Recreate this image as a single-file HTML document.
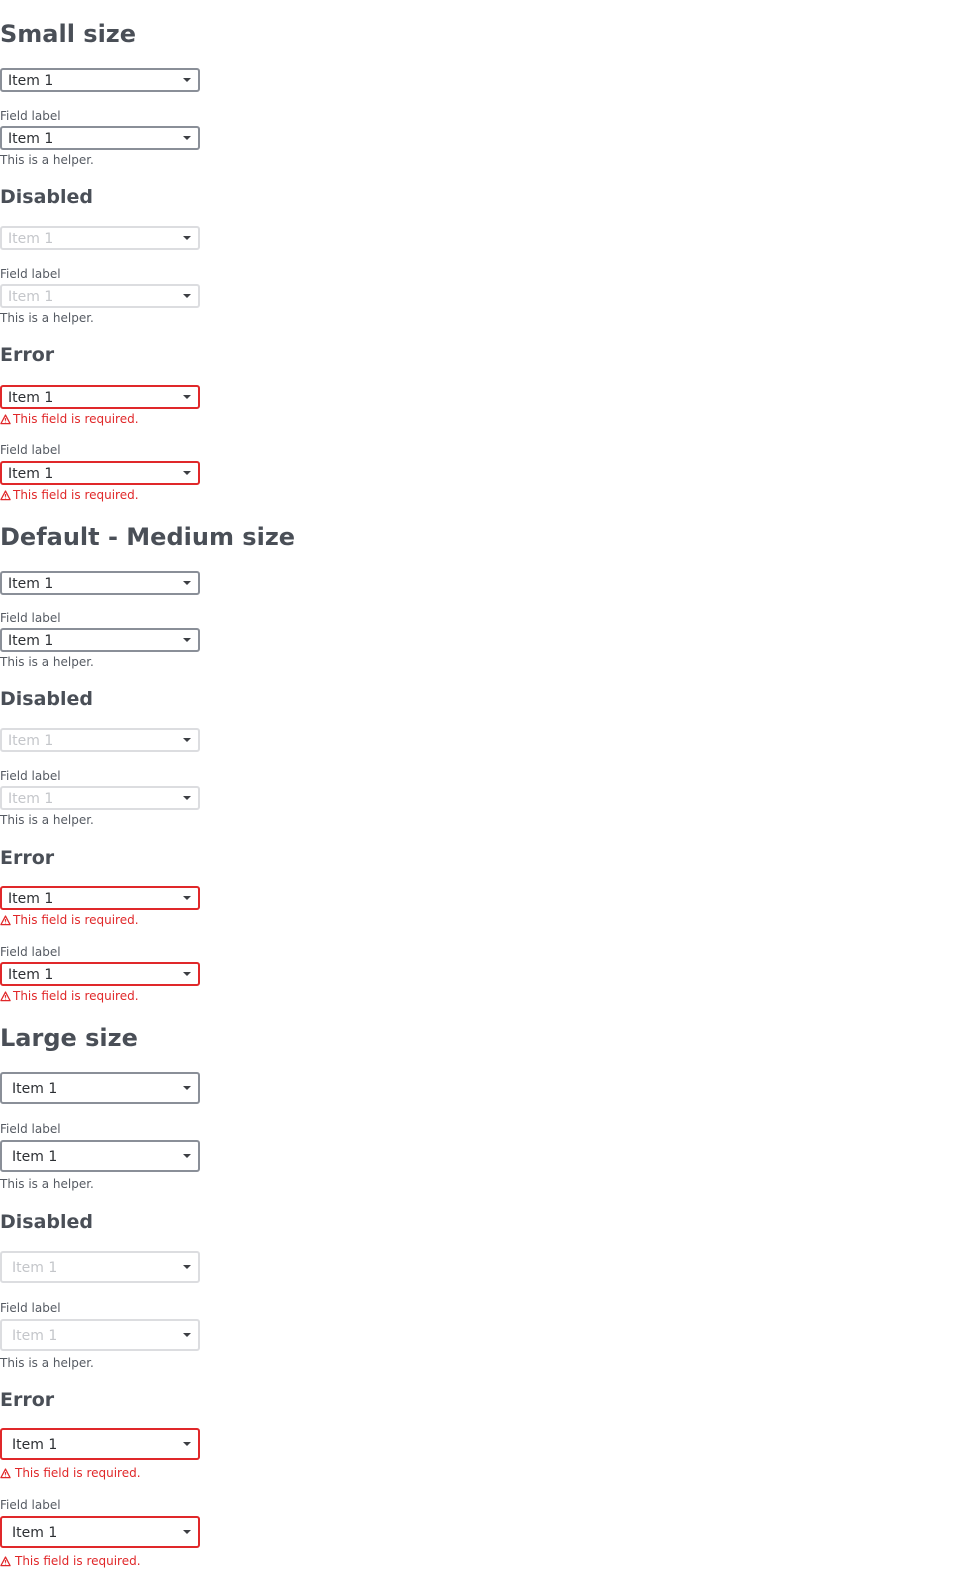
<!DOCTYPE html><html><head><meta charset="utf-8"><style>
body{margin:0;width:977px;height:1570px;position:relative;background:#fff;font-family:"DejaVu Sans","Liberation Sans",sans-serif;}
div{position:absolute;left:0;white-space:nowrap;margin-top:1px}
.h1{font-size:24px;font-weight:bold;color:#4a4f57;line-height:30px;height:30px}
.h2{font-size:19px;font-weight:bold;color:#4a4f57;line-height:24px;height:24px}
.l{font-size:12px;color:#555a62;line-height:16px;height:16px}
.s{margin-top:0;width:200px;box-sizing:border-box;border:2px solid #8a8f98;border-radius:3px;font-size:14px;color:#2c2f33;padding-left:6px;padding-top:1px;height:24px;line-height:20px}
.s.L{height:32px;line-height:28px;padding-left:10px}
.s.d{border-color:#dcdde0;color:#c4c6ca}
.s.e{border-color:#e0282a}
.s::after{content:"";position:absolute;right:7px;top:50%;margin-top:-2px;border-left:4px solid transparent;border-right:4px solid transparent;border-top:4px solid #3c3f44}
.er{font-size:12px;color:#e0282a;line-height:16px;height:16px;padding-left:13px}
.er.L{padding-left:15px}
.er svg{position:absolute;left:0;top:3px}
</style></head><body>
<div class="h1" style="top:18px">Small size</div>
<div class="s" style="top:68px">Item 1</div>
<div class="l" style="top:107px">Field label</div>
<div class="s" style="top:126px">Item 1</div>
<div class="l" style="top:151px">This is a helper.</div>
<div class="h2" style="top:184px">Disabled</div>
<div class="s d" style="top:226px">Item 1</div>
<div class="l" style="top:265px">Field label</div>
<div class="s d" style="top:284px">Item 1</div>
<div class="l" style="top:309px">This is a helper.</div>
<div class="h2" style="top:342px">Error</div>
<div class="s e" style="top:385px">Item 1</div>
<div class="er" style="top:410px"><svg width="11" height="11" viewBox="0 0 12 12"><path d="M6 1.2L11 10.5H1Z" fill="none" stroke="#e0282a" stroke-width="1.4" stroke-linejoin="round"/><path d="M6 4.5V7.3M6 8.4V9.2" stroke="#e0282a" stroke-width="1.3"/></svg>This field is required.</div>
<div class="l" style="top:441px">Field label</div>
<div class="s e" style="top:461px">Item 1</div>
<div class="er" style="top:486px"><svg width="11" height="11" viewBox="0 0 12 12"><path d="M6 1.2L11 10.5H1Z" fill="none" stroke="#e0282a" stroke-width="1.4" stroke-linejoin="round"/><path d="M6 4.5V7.3M6 8.4V9.2" stroke="#e0282a" stroke-width="1.3"/></svg>This field is required.</div>

<div class="h1" style="top:521px">Default - Medium size</div>
<div class="s" style="top:571px">Item 1</div>
<div class="l" style="top:609px">Field label</div>
<div class="s" style="top:628px">Item 1</div>
<div class="l" style="top:653px">This is a helper.</div>
<div class="h2" style="top:686px">Disabled</div>
<div class="s d" style="top:728px">Item 1</div>
<div class="l" style="top:767px">Field label</div>
<div class="s d" style="top:786px">Item 1</div>
<div class="l" style="top:811px">This is a helper.</div>
<div class="h2" style="top:845px">Error</div>
<div class="s e" style="top:886px">Item 1</div>
<div class="er" style="top:911px"><svg width="11" height="11" viewBox="0 0 12 12"><path d="M6 1.2L11 10.5H1Z" fill="none" stroke="#e0282a" stroke-width="1.4" stroke-linejoin="round"/><path d="M6 4.5V7.3M6 8.4V9.2" stroke="#e0282a" stroke-width="1.3"/></svg>This field is required.</div>
<div class="l" style="top:943px">Field label</div>
<div class="s e" style="top:962px">Item 1</div>
<div class="er" style="top:987px"><svg width="11" height="11" viewBox="0 0 12 12"><path d="M6 1.2L11 10.5H1Z" fill="none" stroke="#e0282a" stroke-width="1.4" stroke-linejoin="round"/><path d="M6 4.5V7.3M6 8.4V9.2" stroke="#e0282a" stroke-width="1.3"/></svg>This field is required.</div>

<div class="h1" style="top:1022px">Large size</div>
<div class="s L" style="top:1072px">Item 1</div>
<div class="l" style="top:1120px">Field label</div>
<div class="s L" style="top:1140px">Item 1</div>
<div class="l" style="top:1175px">This is a helper.</div>
<div class="h2" style="top:1209px">Disabled</div>
<div class="s L d" style="top:1251px">Item 1</div>
<div class="l" style="top:1299px">Field label</div>
<div class="s L d" style="top:1319px">Item 1</div>
<div class="l" style="top:1354px">This is a helper.</div>
<div class="h2" style="top:1387px">Error</div>
<div class="s L e" style="top:1428px">Item 1</div>
<div class="er L" style="top:1464px"><svg width="11" height="11" viewBox="0 0 12 12"><path d="M6 1.2L11 10.5H1Z" fill="none" stroke="#e0282a" stroke-width="1.4" stroke-linejoin="round"/><path d="M6 4.5V7.3M6 8.4V9.2" stroke="#e0282a" stroke-width="1.3"/></svg>This field is required.</div>
<div class="l" style="top:1496px">Field label</div>
<div class="s L e" style="top:1516px">Item 1</div>
<div class="er L" style="top:1552px"><svg width="11" height="11" viewBox="0 0 12 12"><path d="M6 1.2L11 10.5H1Z" fill="none" stroke="#e0282a" stroke-width="1.4" stroke-linejoin="round"/><path d="M6 4.5V7.3M6 8.4V9.2" stroke="#e0282a" stroke-width="1.3"/></svg>This field is required.</div>
</body></html>
